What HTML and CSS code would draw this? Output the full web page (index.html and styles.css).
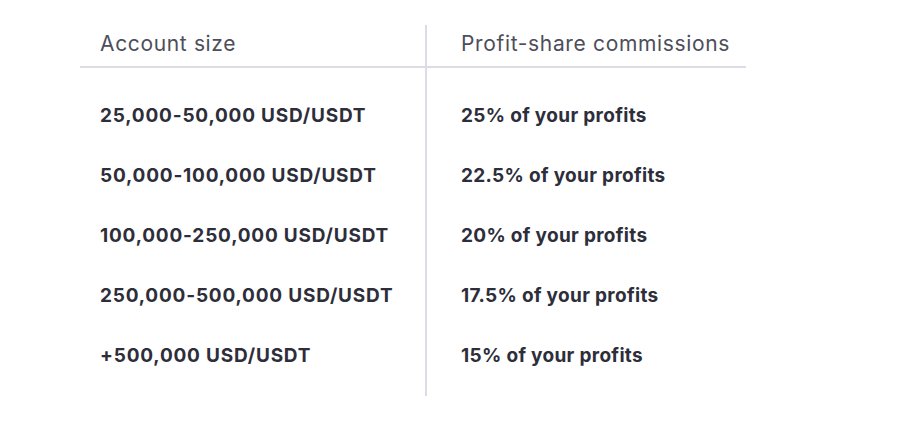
FILE: index.html
```html
<!DOCTYPE html>
<html>
<head>
<meta charset="utf-8">
<link rel="stylesheet" href="styles.css">
</head>
<body>
<div class="table">
  <div class="col col-size">
    <div class="head">Account size</div>
    <div class="body">
      <div class="cell">25,000-50,000 USD/USDT</div>
      <div class="cell">50,000-100,000 USD/USDT</div>
      <div class="cell">100,000-250,000 USD/USDT</div>
      <div class="cell">250,000-500,000 USD/USDT</div>
      <div class="cell">+500,000 USD/USDT</div>
    </div>
  </div>
  <div class="col col-share">
    <div class="head">Profit-share commissions</div>
    <div class="body">
      <div class="cell">25% of your profits</div>
      <div class="cell">22.5% of your profits</div>
      <div class="cell">20% of your profits</div>
      <div class="cell">17.5% of your profits</div>
      <div class="cell">15% of your profits</div>
    </div>
  </div>
</div>
</body>
</html>
```
FILE: styles.css
```css
html, body {
  margin: 0;
  padding: 0;
  background: #ffffff;
}
body {
  font-family: Inter, "Noto Sans", sans-serif;
  color: #2d2e3a;
}
.table {
  display: flex;
  margin: 25px 0 0 80px;
}
.col {
  display: flex;
  flex-direction: column;
}
.col-size {
  width: 345px;
}
.col-share {
  width: 319px;
  border-left: 2px solid #dcdce8;
}
.head {
  height: 41px;
  border-bottom: 2px solid #dcdce8;
  font-size: 21px;
  letter-spacing: 0.65px;
  line-height: 38px;
  color: #4d4e5a;
  font-weight: 400;
}
.body {
  padding: 17px 0 11px;
}
.cell {
  height: 60px;
  display: flex;
  align-items: center;
  font-size: 19px;
  font-weight: 700;
}
.col-size .cell {
  letter-spacing: 0.8px;
}
.col-share .cell {
  letter-spacing: 0.32px;
}
.col-size .head,
.col-size .cell {
  padding-left: 20px;
}
.col-share .head,
.col-share .cell {
  padding-left: 34px;
}
```
